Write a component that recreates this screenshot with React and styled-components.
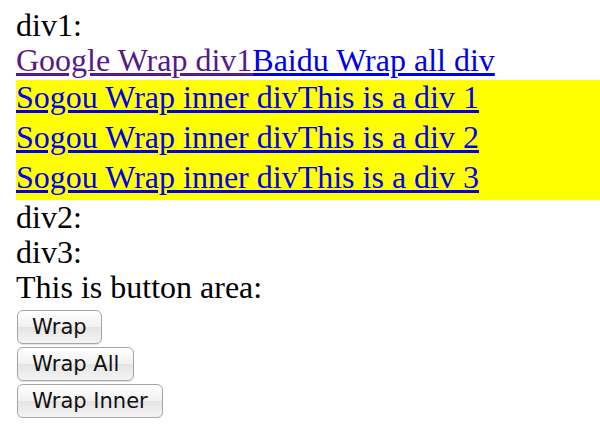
import React from "react";
import styled, { createGlobalStyle } from "styled-components";

const GlobalStyle = createGlobalStyle`
  body {
    margin: 8px 0 0 16px;
    background: #ffffff;
    font-family: "Liberation Serif", "Times New Roman", serif;
    font-size: 32px;
    color: #000000;
  }
`;

const Label = styled.div`
  line-height: 35px;
`;

const LinkRow = styled.div`
  line-height: 35px;
  white-space: nowrap;
`;

const Link = styled.a`
  color: ${(props) => (props.visited ? "#551a8b" : "#0000ee")};
  text-decoration: underline;
  cursor: pointer;
`;

const Highlight = styled.div`
  background: #ffff00;
  margin-top: 2px;
`;

const InnerRow = styled.div`
  line-height: 35px;
  padding-bottom: 5px;
  white-space: nowrap;
`;

const ButtonList = styled.div`
  display: flex;
  flex-direction: column;
  align-items: flex-start;
  gap: 3px;
  margin-top: 5px;
`;

const Button = styled.button`
  font-family: "DejaVu Sans", "Lucida Grande", sans-serif;
  font-size: 21px;
  height: 34px;
  padding: 0 14px;
  margin-left: 1px;
  color: #111;
  background: linear-gradient(#ffffff, #f1f1f1 50%, #e4e4e4 51%, #f4f4f4);
  border: 1px solid #a6a6a6;
  border-radius: 6px;
  box-shadow: 0 1px 1px rgba(0, 0, 0, 0.12);
`;

const App = () => {
  const inner = [1, 2, 3];
  return (
    <>
      <GlobalStyle />
      <Label>div1:</Label>
      <LinkRow>
        <Link visited>Google Wrap div1</Link>
        <Link>Baidu Wrap all div</Link>
      </LinkRow>
      <Highlight>
        {inner.map((n) => (
          <InnerRow key={n}>
            <Link>Sogou Wrap inner divThis is a div {n}</Link>
          </InnerRow>
        ))}
      </Highlight>
      <Label>div2:</Label>
      <Label>div3:</Label>
      <Label>This is button area:</Label>
      <ButtonList>
        <Button>Wrap</Button>
        <Button>Wrap All</Button>
        <Button>Wrap Inner</Button>
      </ButtonList>
    </>
  );
};

export default App;
